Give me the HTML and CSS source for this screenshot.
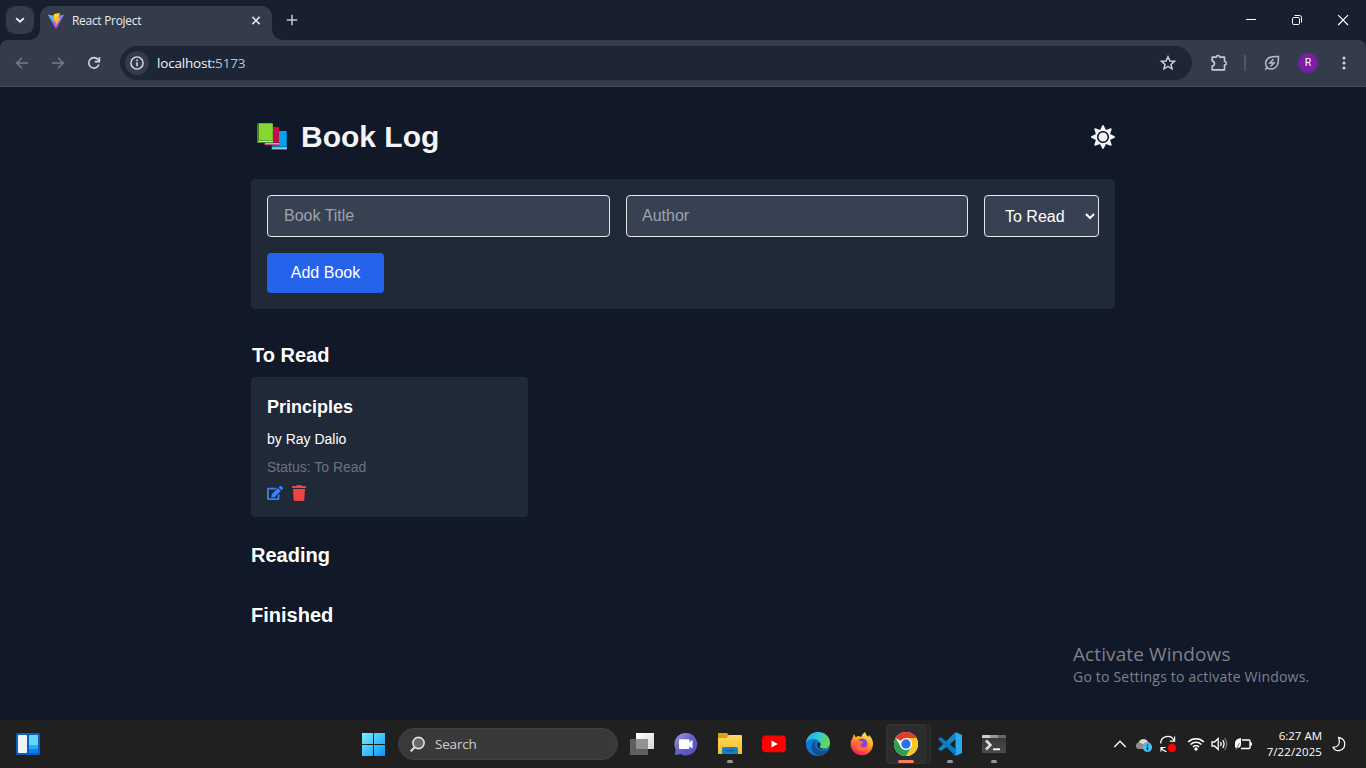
FILE: index.html
```html
<!DOCTYPE html>
<html lang="en">
<head>
<meta charset="utf-8">
<title>React Project</title>
<link rel="stylesheet" href="styles.css">
</head>
<body>
<div class="screen">
  <div class="tabstrip">
    <div class="tab-search"><svg width="28" height="28" viewBox="0 0 28 28"><path d="M10.200 12.200l3.800 3.600 3.800-3.600" fill="none" stroke="#e8eaf0" stroke-width="1.900"/></svg></div>
    <div class="tab">
      <svg class="favicon" width="16" height="16" viewBox="0 0 16 16">
        <defs>
          <linearGradient id="va" x1="0" y1="0" x2=".7" y2="1"><stop stop-color="#41d1ff"/><stop offset=".6" stop-color="#9b62fe"/><stop offset="1" stop-color="#bd34fe"/></linearGradient>
          <linearGradient id="vb" x1="0" y1="0" x2="0" y2="1"><stop stop-color="#ffe044"/><stop offset=".3" stop-color="#ffd11a"/><stop offset="1" stop-color="#ffa800"/></linearGradient>
        </defs>
        <path d="M.5 1.700L8 3l7.500-1.300q.5 0 .3.500L8.400 15.500q-.4.500-.8 0L.2 2.200q-.2-.5.300-.5z" fill="url(#va)"/>
        <path d="M11.800 0L6 1.100 5.300 7.800l2-.4-.5 2.600 1.300-.3-.8 3.500 5.200-7.900-2.100.3z" fill="url(#vb)"/>
      </svg>
      <span class="tab-title">React Project</span>
      <svg width="16" height="16" viewBox="0 0 16 16"><path d="M4.400 3.900l7.200 7.200M11.600 3.900l-7.200 7.200" stroke="#e8eaf0" stroke-width="1.500"/></svg>
    </div>
    <svg class="new-tab" width="20" height="20" viewBox="0 0 20 20"><path d="M10 4.800v10.400M4.800 10h10.400" stroke="#c3cad8" stroke-width="1.500"/></svg>
    <div class="window-buttons">
      <svg width="46" height="40" viewBox="0 0 46 40"><path d="M18 19.500h10" stroke="#fff"/></svg>
      <svg width="46" height="40" viewBox="0 0 46 40"><rect x="18.500" y="17.500" width="7" height="7" rx="1.200" fill="none" stroke="#fff"/><path d="M20.500 15.500h5q2 0 2 2v5" fill="none" stroke="#fff"/></svg>
      <svg width="46" height="40" viewBox="0 0 46 40"><path d="M18.200 15.200l9.800 9.800M28 15.200L18.200 25" stroke="#fff" stroke-width="1.200"/></svg>
    </div>
  </div>

  <div class="toolbar-back">
  <div class="toolbar">
    <div class="nav">
      <svg width="16" height="16" viewBox="0 0 16 16" fill="none" stroke="#747d8e" stroke-width="1.500"><path d="M14 8H3M8 2.800L2.800 8 8 13.200"/></svg>
      <svg width="16" height="16" viewBox="0 0 16 16" fill="none" stroke="#747d8e" stroke-width="1.500"><path d="M2 8h11M8 2.800L13.200 8 8 13.200"/></svg>
      <svg width="16" height="16" viewBox="0 0 16 16" fill="none" stroke="#d0d6e3" stroke-width="1.600"><path d="M12.900 9.500A5.200 5.200 0 1 1 12 4.600l1 1.400"/><path d="M13.400 2v4.600H8.800"/></svg>
    </div>
    <div class="address">
      <span class="site-info"><svg width="16" height="16" viewBox="0 0 16 16"><circle cx="8" cy="8" r="6.100" fill="none" stroke="#dde1ea" stroke-width="1.400"/><path d="M8 7.200v4M8 4.600v1.500" stroke="#dde1ea" stroke-width="1.500"/></svg></span>
      <span class="url">localhost:<span>5173</span></span>
      <svg width="18" height="18" viewBox="0 0 18 18"><path d="M9 2.700l1.900 4.300 4.600.4-3.500 3 1.050 4.500L9 12.500l-4.050 2.400L6 10.400l-3.500-3 4.600-.4z" fill="none" stroke="#d0d5df" stroke-width="1.400"/></svg>
    </div>
    <div class="tools">
      <svg width="18" height="18" viewBox="0 0 18 18"><path d="M2.200 3.100h4.200q.1-1.600 1.700-1.600t1.700 1.600h4.700v4.200q1.800.2 1.800 1.900t-1.800 1.800v4.900H2.200v-3.800q2.300-.5 2.300-2.600T2.200 6.900z" fill="none" stroke="#c3cad8" stroke-width="1.600" stroke-linejoin="round"/></svg>
      <i class="divider"></i>
      <svg width="18" height="18" viewBox="0 0 18 18" fill="none" stroke="#b3bccd" stroke-width="1.500"><path d="M2.200 15.600l2-2C1.500 10.600 2.200 5 7.200 3.300c2.700-.9 5.800-.7 8.200-.8.200 3 .1 6.600-1.200 9-2.100 3.800-6.500 4.700-10 2.100"/><path d="M10.500 5.200L6.800 9h4.200l-3.500 3.600" stroke-width="1.500"/></svg>
      <span class="avatar">R</span>
      <svg width="18" height="18" viewBox="0 0 18 18" fill="#d0d5df"><circle cx="9" cy="3.900" r="1.500"/><circle cx="9" cy="9" r="1.500"/><circle cx="9" cy="14.100" r="1.500"/></svg>
    </div>
  </div>
  </div>

  <main class="page">
    <div class="container">
      <header class="header">
        <h1 class="title">
          <svg width="32" height="30" viewBox="0 0 32 30">
            <path d="M15 9h14q1 0 1 1v18H14.500z" fill="#0078b8"/><rect x="16" y="9" width="13" height="15" fill="#00a4ef"/><path d="M15 25.500h15v1.200H15z" fill="#d9e6ee"/>
            <path d="M6.500 5H21q1 0 1 1v17.500H6.500z" fill="#9d0b38"/><rect x="9" y="5" width="13" height="15" fill="#c80c46"/><path d="M8 21.200h14v1.200H8z" fill="#e5d4da"/>
            <path d="M0 2.500q0-1.500 1.500-1.500H15q1 0 1 1v19H1q-1 0-1-1z" fill="#47851f"/><path d="M2 1.500h13q.7 0 .7.700v16H2z" fill="#86d72f"/><path d="M1.200 18.900H16v1H1.200z" fill="#e2ead8"/>
          </svg>
          <span>Book Log</span>
        </h1>
        <svg width="24" height="24" viewBox="0 0 512 512" fill="#f3f4f6"><path d="M256 160c-52.9 0-96 43.1-96 96s43.1 96 96 96 96-43.1 96-96-43.1-96-96-96zm246.400 80.500l-94.700-47.300 33.500-100.400c4.500-13.600-8.400-26.500-21.900-21.900l-100.400 33.500-47.400-94.800c-6.400-12.800-24.600-12.800-31 0l-47.300 94.700L92.700 70.800c-13.600-4.500-26.500 8.400-21.900 21.900l33.500 100.400-94.700 47.400c-12.800 6.400-12.800 24.600 0 31l94.700 47.300-33.500 100.500c-4.500 13.600 8.400 26.500 21.900 21.900l100.400-33.500 47.300 94.700c6.400 12.800 24.600 12.800 31 0l47.300-94.700 100.400 33.500c13.600 4.500 26.500-8.400 21.900-21.900l-33.500-100.400 94.700-47.300c13-6.500 13-24.700.2-31.100zm-155.900 106c-49.900 49.900-131.100 49.900-181 0-49.900-49.900-49.900-131.100 0-181 49.900-49.900 131.100-49.900 181 0 49.900 49.900 49.900 131.100 0 181z"/></svg>
      </header>

      <form class="book-form">
        <input class="field" type="text" placeholder="Book Title">
        <input class="field author-field" type="text" placeholder="Author">
        <select class="field"><option>To Read</option></select>
        <button class="add" type="button">Add Book</button>
      </form>

      <section class="shelf">
        <h2 class="nudge">To Read</h2>
        <article class="card">
          <h3>Principles</h3>
          <p class="author">by Ray Dalio</p>
          <p class="status">Status: To Read</p>
          <div class="actions">
            <svg width="16" height="16" viewBox="0 0 576 512" fill="#3b82f6"><path d="M402.600 83.200l90.200 90.200c3.800 3.800 3.800 10 0 13.800L274.400 405.600l-92.800 10.300c-12.400 1.400-22.900-9.100-21.500-21.500l10.300-92.800L388.800 83.200c3.800-3.800 10-3.800 13.800 0zm162-22.900l-48.800-48.800c-15.200-15.200-39.900-15.200-55.200 0l-35.400 35.400c-3.800 3.800-3.800 10 0 13.800l90.200 90.200c3.800 3.800 10 3.800 13.800 0l35.400-35.400c15.200-15.300 15.200-40 0-55.200zM384 346.200V448H64V128h229.800c3.200 0 6.200-1.300 8.500-3.500l40-40c7.600-7.600 2.200-20.500-8.500-20.500H48C21.500 64 0 85.500 0 112v352c0 26.500 21.500 48 48 48h352c26.500 0 48-21.500 48-48V306.200c0-10.700-12.900-16-20.500-8.500l-40 40c-2.200 2.300-3.500 5.300-3.500 8.500z"/></svg>
            <svg width="16" height="16" viewBox="0 0 448 512" fill="#ef4444"><path d="M432 32H312l-9.400-18.700A24 24 0 0 0 281.100 0H166.800a23.720 23.720 0 0 0-21.400 13.300L136 32H16A16 16 0 0 0 0 48v32a16 16 0 0 0 16 16h416a16 16 0 0 0 16-16V48a16 16 0 0 0-16-16zM53.200 467a48 48 0 0 0 47.900 45h245.800a48 48 0 0 0 47.900-45L416 128H32z"/></svg>
          </div>
        </article>
      </section>
      <section class="shelf"><h2>Reading</h2></section>
      <section class="shelf"><h2>Finished</h2></section>
    </div>
  </main>

  <div class="taskbar">
    <div class="widgets">
      <svg width="24" height="22" viewBox="0 0 24 22"><rect width="24" height="22" rx="1.500" fill="#0b62bb"/><rect x="2" y="2" width="9" height="18" rx="1" fill="#f2f2f2"/><rect x="13" y="2" width="9" height="18" rx="1" fill="#0a84e8"/><path d="M13 3q0-1 1-1h7q1 0 1 1v9h-9z" fill="#63d5ff"/><path d="M13 12h9v4h-9z" fill="#27a9f5"/></svg>
    </div>
    <svg class="start" width="24" height="24" viewBox="0 0 24 24"><defs><linearGradient id="win" gradientUnits="userSpaceOnUse" x1="1" y1="1" x2="24" y2="24"><stop stop-color="#78f3ff"/><stop offset="1" stop-color="#0b91fa"/></linearGradient></defs><path d="M1 1h11v11H1zM13 1h11v11H13zM1 13h11v11H1zM13 13h11v11H13z" fill="url(#win)"/></svg>
    <div class="search">
      <svg width="16" height="16" viewBox="0 0 16 16"><path d="M.7 15.300l4.400-4.600" stroke="#d8d8d8" stroke-width="2.200"/><circle cx="8.500" cy="7" r="5.600" fill="#686868" stroke="#e2e2e2" stroke-width="1.600"/></svg>
      <span>Search</span>
    </div>
    <div class="apps">
      <div class="app"><svg width="24" height="24" viewBox="0 0 24 24"><defs><linearGradient id="tv" x1="0" y1="0" x2="1" y2="1"><stop stop-color="#fff"/><stop offset="1" stop-color="#d6d6d6"/></linearGradient></defs><path d="M6 1h18v16H6z" fill="url(#tv)"/><path d="M0 7h18v16H0z" fill="#5f5f5f"/><path d="M6 7h12v10H6z" fill="#929292"/></svg></div>
      <div class="app"><svg width="24" height="24" viewBox="0 0 24 24"><defs><linearGradient id="chat" x1="0" y1="0" x2="1" y2="1"><stop stop-color="#a59adf"/><stop offset=".5" stop-color="#6560c8"/><stop offset="1" stop-color="#504bc4"/></linearGradient></defs><path d="M12 1a11.200 11.200 0 1 1-5 21.200L.7 23l1-5.600A11.200 11.200 0 0 1 12 1z" fill="url(#chat)"/><rect x="5" y="7.300" width="10.500" height="9.700" rx="1" fill="#fff"/><path d="M15 11l3-3q.5-.3.500.5v7.500q0 .8-.5.500l-3-3z" fill="#fff"/></svg></div>
      <div class="app"><svg width="24" height="24" viewBox="0 0 24 24"><defs><linearGradient id="fold" x1="0" y1="0" x2="0" y2="1"><stop stop-color="#ffda62"/><stop offset="1" stop-color="#f7bd27"/></linearGradient></defs><path d="M0 2q0-1 1-1h8l2 2.500-2 3H0z" fill="#e2a010"/><path d="M0 6h8.500l2.500-3h12q1 0 1 1v18H0z" fill="url(#fold)"/><path d="M4 22v-5q0-2 2-2h12q2 0 2 2v5z" fill="#1280cf"/><path d="M8 18.700h8" stroke="#075c9d" stroke-width="1.200"/></svg><i class="dot"></i></div>
      <div class="app"><svg width="24" height="24" viewBox="0 0 24 24"><rect y="3.600" width="24" height="16.600" rx="4" fill="#f00"/><path d="M9.500 8.500l6.200 3.500-6.200 3.500z" fill="#fff"/></svg></div>
      <div class="app"><svg width="24" height="24" viewBox="0 0 24 24"><defs><linearGradient id="ed" x1="0" y1="0" x2="1" y2=".4"><stop stop-color="#1ea5e8"/><stop offset=".5" stop-color="#30c7dc"/><stop offset="1" stop-color="#63d957"/></linearGradient></defs><circle cx="12" cy="12" r="12" fill="#0b78d2"/><path d="M0 10.500C1.200 4 6 0 12 0c7 0 12 5 12 10.500 0 4.300-3.200 6.300-6.600 6.300-3.400 0-4.400-1.300-3.500-2.300C16 10.500 12 7 8 7 4.200 7 1.200 8.700 0 10.500z" fill="url(#ed)"/><path d="M9.500 9.500C4.500 11 4 18 9 22c1.500 1.200 3 2 5 1.800 4-.5 7-2.800 8.500-5.500q.3-.8-.6-.4C16 20.500 9 17 9 12q0-1.500 1.500-2.500z" fill="#124f94"/><path d="M14 11q-3-1.500-2.900 1.800c.2 4 5.200 5.700 9.400 3.700-5 .8-7.300-.9-6.600-2 .8-1.200.9-2.500.1-3.500z" fill="#202020"/></svg></div>
      <div class="app"><svg width="24" height="24" viewBox="0 0 24 24"><defs><linearGradient id="fx" x1=".8" y1="0" x2=".3" y2="1"><stop stop-color="#fff152"/><stop offset=".4" stop-color="#ffad23"/><stop offset=".72" stop-color="#ff5637"/><stop offset="1" stop-color="#f41476"/></linearGradient></defs><path d="M4 2l1.500 3 3.300-1L11 5q1-3 4-5 .8 3 3.500 5l.5-2c3 3 4 6 4 9a11.200 11.200 0 1 1-22.400 0c0-2.500.8-4.300 1.600-5.300z" fill="url(#fx)"/><circle cx="12" cy="12" r="5.500" fill="#8544df"/><path d="M5.500 9.500c2-2 4-1.200 5.500-.2 2 .2 2.500 1 1.500 2-2 .5-2.500 2-1.500 3.200 2 2 4.500 1 6-1-.2 4-4.500 6.500-8.500 4.500-3.500-2-4-5.500-3-8.500z" fill="#ff713b"/></svg></div>
      <div class="app active"><svg width="24" height="24" viewBox="0 0 24 24"><circle cx="12" cy="12" r="12" fill="#fff"/><path d="M12 12L1.600 6A12 12 0 0 1 22.400 6z" fill="#e33b2e"/><path d="M12 6h10.400A12 12 0 0 1 12 24l5.200-9z" fill="#fcc624"/><path d="M1.600 6A12 12 0 0 0 12 24l5.200-9q-5.200 6-10.400 0z" fill="#2da04b"/><circle cx="12" cy="12" r="6" fill="#fff"/><circle cx="12" cy="12" r="4.700" fill="#2871e8"/></svg><i class="bar"></i></div>
      <div class="app"><svg width="24" height="24" viewBox="0 0 24 24"><path d="M17.500 0L2 15.200l-2 1.800L2.500 19l3-1.800L18 7z" fill="#0b88cf"/><path d="M2.500 5L0 7l17.500 17V17L5.500 7.200z" fill="#087bc2"/><path d="M17.500 0L24 3v18l-6.500 3z" fill="#29a9f1"/></svg><i class="dot"></i></div>
      <div class="app"><svg width="24" height="24" viewBox="0 0 24 24"><defs><linearGradient id="term" x1="0" y1="0" x2="0" y2="1"><stop stop-color="#343434"/><stop offset="1" stop-color="#4b4b4b"/></linearGradient></defs><rect y="3" width="24" height="18" rx="1" fill="url(#term)"/><path d="M0 6V4q0-1 1-1h7v3z" fill="#cfcfcf"/><path d="M8 3h8v3H8z" fill="#999"/><path d="M16 3h7q1 0 1 1v2h-8z" fill="#686868"/><path d="M4 8.500l4.500 4.500-4.500 4.500" fill="none" stroke="#ddd" stroke-width="2.500"/><path d="M11 17.300h7" stroke="#fff" stroke-width="1.800"/></svg><i class="dot"></i></div>
    </div>
    <div class="tray">
      <svg width="24" height="24" viewBox="0 0 24 24"><path d="M6.300 15l5.700-5.800 5.700 5.800" fill="none" stroke="#fff" stroke-width="1.300"/></svg>
      <svg width="24" height="24" viewBox="0 0 24 24"><path d="M7 17a3.300 3.300 0 0 1-.5-6.500A5 5 0 0 1 15.800 10 4 4 0 0 1 18 17z" fill="#8d8d8d"/><path d="M7.500 9.300A5 5 0 0 1 16 10q-3.500 0-4.500 2.500-2-1.800-4.500-1.700z" fill="#dadada"/><circle cx="15.500" cy="15.400" r="4.600" fill="#42bff3"/><path d="M15.500 14.700v3.500M15.500 12.400v1.300" stroke="#102d3d" stroke-width="1.400"/></svg>
      <svg width="24" height="24" viewBox="0 0 24 24"><path d="M4.700 11.500A7 7 0 0 1 18 8.300M18.600 4.500v4.600h-4.800M5 19.500v-4h4.500M5.500 16q1.500 3 5 3.500" fill="none" stroke="#fff" stroke-width="1.200"/><circle cx="16" cy="16" r="4.200" fill="#f00"/></svg>
      <svg class="wifi" width="22" height="24" viewBox="0 0 22 24" fill="none" stroke="#fff" stroke-width="1.500"><path d="M3.200 10a11 11 0 0 1 15.600 0M5.600 12.500a7.700 7.700 0 0 1 10.800 0M8 14.900a4.300 4.300 0 0 1 6 0"/><circle cx="11" cy="17" r=".9" fill="#fff"/></svg>
      <svg class="volume" width="24" height="24" viewBox="0 0 24 24" fill="none" stroke="#fff" stroke-width="1.300"><path d="M5 10h2.500L11.200 6.500v11L7.500 14H5z"/><path d="M13.500 10q1.500 2 0 4M15.700 8q2.700 4 0 8"/><path d="M17.700 6.200q4 5.800 0 11.600" stroke="#777"/></svg>
      <svg width="24" height="24" viewBox="0 0 24 24"><path d="M11 8h7q1 0 1 1v6.500q0 1-1 1h-8M20.200 10.500v3" fill="none" stroke="#fff" stroke-width="1.400"/><path d="M4 15.500V11q0-2.500 2.500-4L10 6v6q0 4-4 4z" fill="#fff"/><path d="M5 18l3.500-7" stroke="#777"/></svg>
      <div class="clock"><div class="time">6:27 AM</div><div class="date">7/22/2025</div></div>
      <svg class="moon" width="16" height="16" viewBox="0 0 16 16"><path d="M7.500 1.300C11.500 2.200 14 4.800 13.700 8.300A6.200 6.200 0 0 1 2 11.200C5 11.300 8 9.600 8.300 6.500 8.500 4.400 8 2.900 7.500 1.300z" fill="none" stroke="#fff" stroke-width="1.200" stroke-linejoin="round"/></svg>
    </div>
  </div>

  <div class="watermark"><div class="wm-title">Activate Windows</div><div class="wm-text">Go to Settings to activate Windows.</div></div>
</div>
</body>
</html>
```
FILE: styles.css
```css
* { box-sizing: border-box; margin: 0; padding: 0; }
svg { display: block; flex: none; }
body { font-family: "Liberation Sans", Arial, sans-serif; background: #111827; color: #fff; overflow: hidden; }
.screen { position: relative; width: 1366px; height: 768px; display: flex; flex-direction: column; }

/* browser tab strip */
.tabstrip { height: 40px; display: flex; background: #18202f; font-family: "Open Sans", sans-serif; }
.tab-search { width: 28px; height: 28px; margin: 6px 6px 0; border-radius: 9px; background: #343c4c; }
.tab { position: relative; width: 232px; height: 34px; margin-top: 6px; padding: 0 8px 5px; display: flex; align-items: center; background: #343c4c; border-radius: 10px 10px 0 0; }
.tab::before, .tab::after { content: ""; position: absolute; bottom: 0; width: 10px; height: 10px; }
.tab::before { left: -10px; background: radial-gradient(circle at 0 0, transparent 9.500px, #343c4c 10px); }
.tab::after { right: -10px; background: radial-gradient(circle at 100% 0, transparent 9.500px, #343c4c 10px); }
.tab-title { flex: 1; margin-left: 8px; font-size: 12px; letter-spacing: -0.3px; color: #e8eaf0; }
.new-tab { margin: 10px 0 0 10px; }
.window-buttons { display: flex; margin-left: auto; }

/* browser toolbar */
.toolbar-back { background: #18202f; }
.toolbar { height: 47px; display: flex; align-items: center; background: #343c4c; border-bottom: 1px solid #4a4d54; border-radius: 8px 8px 0 0; font-family: "Open Sans", sans-serif; }
.nav { display: flex; gap: 20px; padding-left: 14px; width: 120px; }
.address { width: 1072px; height: 34px; display: flex; align-items: center; padding: 0 15px 0 5px; border-radius: 17px; background: #1e2636; }
.site-info { width: 24px; height: 24px; padding: 4px; border-radius: 50%; background: #343c4c; }
.url { flex: 1; margin-left: 8px; font-size: 13.500px; letter-spacing: -0.2px; color: #f0f2f6; }
.url span { color: #bcc3d0; }
.tools { display: flex; align-items: center; padding-left: 18px; }
.divider { width: 2px; height: 16px; margin: 0 17px 0 16px; background: #4c566a; }
.avatar { width: 20px; height: 20px; margin: 0 17px; border-radius: 50%; background: #7b1fa2; font: 10.500px/20px Roboto, sans-serif; text-align: center; }

/* page */
.page { height: 633px; background: #111827; }
.container { width: 864px; margin: 0 auto; padding-top: 32px; }
.header { display: flex; justify-content: space-between; align-items: center; height: 36px; margin-bottom: 24px; }
.title { display: flex; align-items: center; gap: 12px; padding-left: 6px; font-size: 30px; line-height: 36px; color: #f3f4f6; }
.book-form { display: grid; grid-template-columns: 343px 342px 115px; gap: 16px; padding: 16px; height: 130px; border-radius: 4px; background: #1f2937; }
.field { height: 42px; padding: 8px 16px; border: 1px solid #e5e7eb; border-radius: 4px; background-color: #374151; color: #fff; font: 16px/24px "Liberation Sans", Arial, sans-serif; }
.author-field { padding-left: 15px; }
.field::placeholder { color: #9ca3af; }
.add { width: 117px; height: 40px; border: 0; border-radius: 4px; background: #2563eb; color: #fff; font: 16px/24px "Liberation Sans", Arial, sans-serif; }
.shelf { margin-top: 32px; }
.shelf + .shelf { margin-top: 24px; }
.shelf h2 { font-size: 20px; line-height: 28px; padding-bottom: 8px; }
.shelf .nudge { padding-left: 1px; }
.card { width: 277px; height: 140px; padding: 16px; border-radius: 4px; background: #1f2937; }
.card h3 { font-size: 18px; line-height: 28px; }
.card p { font-size: 14px; line-height: 20px; margin-top: 8px; }
.card .status { color: #6b7280; }
.actions { display: flex; gap: 8px; margin-top: 8px; }

/* taskbar */
.taskbar { height: 48px; display: flex; align-items: center; background: #202020; font-family: "Open Sans", sans-serif; }
.widgets { width: 361px; padding-left: 16px; }
.search { display: flex; align-items: center; gap: 9px; width: 220px; height: 32px; margin-left: 13px; padding-left: 11px; border-radius: 16px; background: #393939; border: 1px solid #404040; font-size: 13.500px; letter-spacing: -0.2px; color: #d0d0d0; }
.apps { display: flex; gap: 4px; margin-left: 4px; }
.app { position: relative; width: 40px; height: 40px; padding: 8px; border-radius: 4px; }
.active::before { content: ""; position: absolute; inset: 0 -1px 0 0; width: auto; margin: 0 -4px 0 0; border: 1px solid #303030; border-radius: 4px; background: #272727; }
.active::after { content: ""; position: absolute; inset: 0 4px 0 0; margin-right: -4px; border: 1px solid #343434; border-radius: 4px; background: #2d2d2d; }
.active svg, .active .bar { z-index: 1; }
.active svg { position: relative; }
.app:nth-child(7) { left: 0; margin-left: 0; }
.dot, .bar { position: absolute; bottom: 1px; left: 17px; width: 6px; height: 3px; border-radius: 2px; background: #9a9a9a; }
.bar { left: 12px; width: 16px; background: #f47e61; }
.tray { display: flex; align-items: center; margin-left: auto; padding-right: 19px; }
.wifi { margin: 0 1px 0 5px; }
.volume { margin-left: -1px; }
.clock { width: 67px; margin-right: 1px; font-size: 11.500px; line-height: 16px; text-align: right; color: #fff; white-space: nowrap; }
.date { letter-spacing: 0.1px; }
.moon { margin-left: 8px; }
.watermark { position: absolute; left: 1073px; top: 642px; font-family: "Open Sans", sans-serif; color: #7e818a; white-space: nowrap; }
.wm-title { font-size: 19px; line-height: 24px; letter-spacing: 0.1px; }
.wm-text { font-size: 14px; line-height: 22px; letter-spacing: 0.2px; }
```
